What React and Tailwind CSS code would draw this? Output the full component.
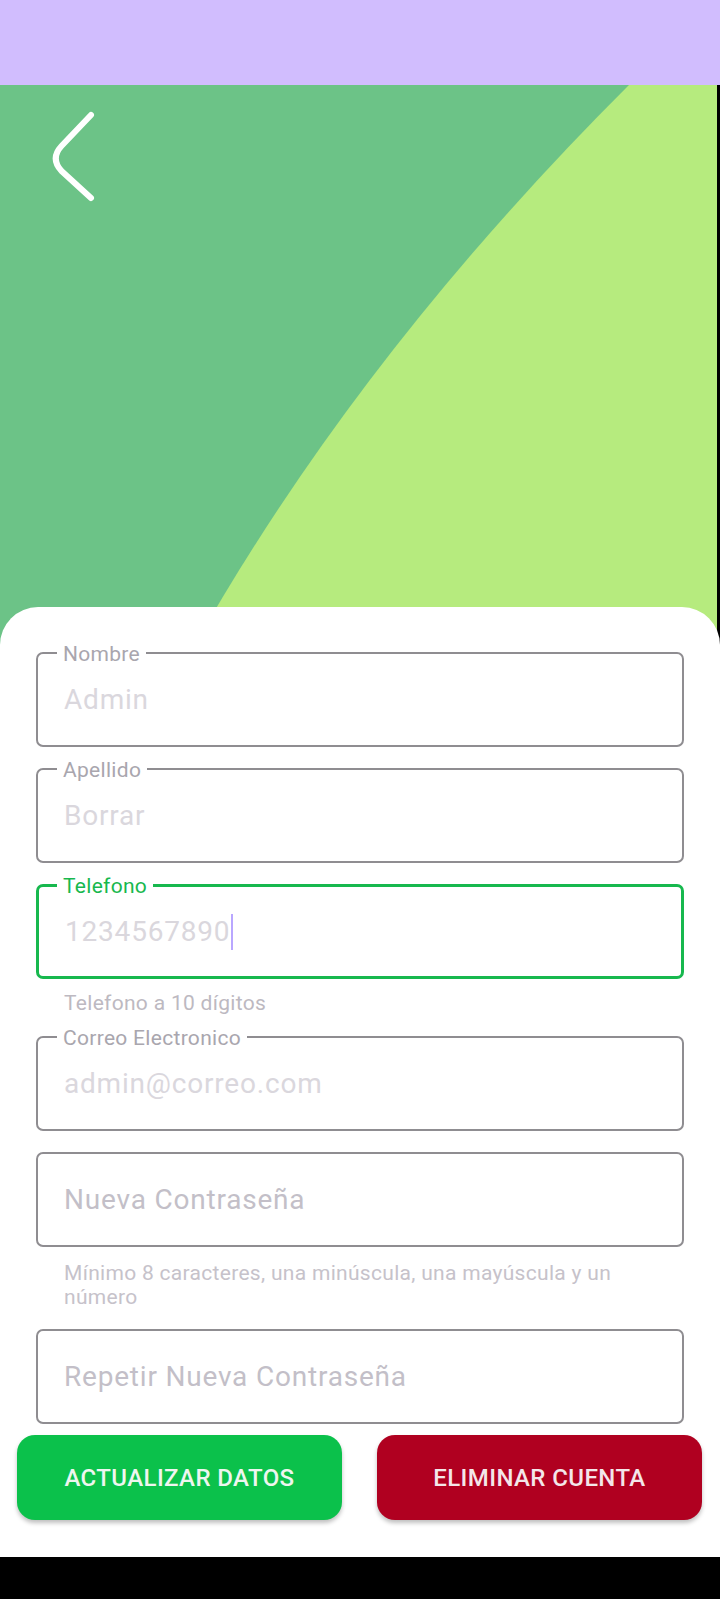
import React from "react";

const font = { fontFamily: "Roboto, 'Noto Sans', sans-serif" };

function Field({ label, value, focused, hint, caret }) {
  return (
    <div
      className={
        "relative h-[95px] rounded-[7px] flex items-center px-[26px] " +
        (focused ? "border-[3px] border-[#17b84e] px-[25px]" : "border-2 border-[#8f8d91]")
      }
    >
      {label && (
        <span
          className={
            "absolute px-[6px] bg-white text-[21px] leading-[24px] tracking-[0.3px] " +
            (focused ? "text-[#17b84e] top-[-13px] left-[18px]" : "text-[#a9a6ae] top-[-12px] left-[19px]")
          }
        >
          {label}
        </span>
      )}
      {value && (
        <span className="text-[28px] leading-[36px] tracking-[0.8px] text-[#dad7dd] flex items-center">
          {value}
          {caret && <span className="inline-block w-[2px] h-[36px] bg-[#b9a7ff] ml-[1px]" />}
        </span>
      )}
      {hint && (
        <span className="text-[28px] leading-[36px] tracking-[0.8px] text-[#c3bfc8]">{hint}</span>
      )}
    </div>
  );
}

export default function App() {
  return (
    <div className="w-[720px] min-h-[1599px] flex flex-col bg-white" style={font}>
      <div className="h-[85px] bg-[#d1bdfe]" />
      <div className="relative h-[565px] bg-[#6cc387] border-r-[3px] border-black">
        <svg className="absolute inset-0" width="717" height="565" viewBox="0 85 717 565">
          <path d="M629 85 Q358 355 192 650 L717 650 L717 85 Z" fill="#b6eb7e" />
        </svg>
        <div className="relative pt-[26px] pl-[48px]">
          <svg width="52" height="96" viewBox="48 111 52 96">
            <path
              d="M91 115 L61.5 146 Q50 158.5 61.5 171 L91 198"
              fill="none"
              stroke="white"
              strokeWidth="6"
              strokeLinecap="round"
              strokeLinejoin="round"
            />
          </svg>
        </div>
      </div>
      <div className="relative -mt-[43px] bg-white rounded-t-[38px] px-[36px] pt-[45px] pb-[37px]">
        <Field label="Nombre" value="Admin" />
        <div className="mt-[21px]">
          <Field label="Apellido" value="Borrar" />
        </div>
        <div className="mt-[21px]">
          <Field label="Telefono" value="1234567890" focused caret />
        </div>
        <div className="mt-[12px] pl-[28px] text-[21px] leading-[24px] tracking-[0.3px] text-[#bdb9c1]">
          Telefono a 10 dígitos
        </div>
        <div className="mt-[21px]">
          <Field label="Correo Electronico" value="admin@correo.com" />
        </div>
        <div className="mt-[21px]">
          <Field hint="Nueva Contraseña" />
        </div>
        <div className="mt-[14px] pl-[28px] text-[21px] leading-[24px] tracking-[0.3px] text-[#c6c2ca]">
          <div>Mínimo 8 caracteres, una minúscula, una mayúscula y un</div>
          <div>número</div>
        </div>
        <div className="mt-[20px]">
          <Field hint="Repetir Nueva Contraseña" />
        </div>
        <div className="mt-[11px] -mx-[19px] flex gap-[35px]">
          <button className="w-[325px] h-[85px] rounded-[18px] bg-[#0bc14b] text-[#eef6ef] text-[24px] font-medium tracking-[0.4px] shadow-[0_3px_4px_rgba(0,0,0,0.25)]">
            ACTUALIZAR DATOS
          </button>
          <button className="w-[325px] h-[85px] rounded-[18px] bg-[#b00020] text-[#f4e6e9] text-[24px] font-medium tracking-[0.4px] shadow-[0_3px_4px_rgba(0,0,0,0.25)]">
            ELIMINAR CUENTA
          </button>
        </div>
      </div>
      <div className="h-[42px] bg-black" />
    </div>
  );
}
